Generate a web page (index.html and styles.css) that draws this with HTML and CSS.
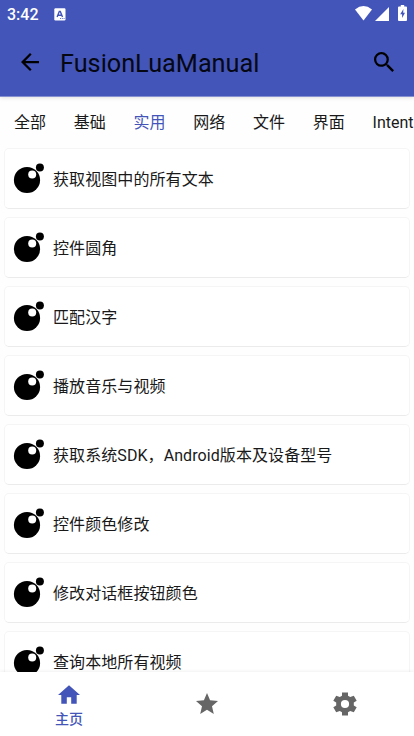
FILE: index.html
```html
<!DOCTYPE html>
<html lang="zh-CN">
<head>
<meta charset="utf-8">
<title>FusionLuaManual</title>
<link rel="stylesheet" href="styles.css">
</head>
<body>
<svg class="defs" aria-hidden="true">
  <symbol id="moon" viewBox="0 0 32 32"><circle cx="14" cy="18" r="13.1"/><circle cx="26.9" cy="5.6" r="4"/><circle cx="19.2" cy="12.6" r="4" fill="#fff"/></symbol>
</svg>
<div class="app">
  <header>
    <div class="status">
      <span class="time">3:42</span>
      <svg class="badge" viewBox="0 0 12 13"><rect x=".3" y=".3" width="11.2" height="12.2" rx="1.2" fill="#fff"/><path d="M3.1 9 5.3 3.5h1L8.5 9M4 7.2h3.6" fill="none" stroke="#4355b9" stroke-width="1.4"/><path d="M6 10.5h1m.8 0h1m.8 0h1" stroke="#4355b9" stroke-width=".8"/></svg>
      <span class="spacer"></span>
      <svg class="wifi" viewBox="0 0 17 15"><path d="M0 3.4Q8.5-3.2 17 3.4L8.5 14.6Z" fill="#fff"/></svg>
      <svg class="signal" viewBox="0 0 14 14"><path d="M14 0v14H0Z" fill="#fff"/></svg>
      <svg class="battery" viewBox="0 0 9 16"><path d="M2.8 0h3.4v1.5H8q1 0 1 1V15q0 1-1 1H1q-1 0-1-1V2.500q0-1 1-1h1.800Z" fill="#fff"/><path d="M5.400 4 2.200 9.200h1.900V13l2.900-5.200H5.200Z" fill="#4355b9"/></svg>
    </div>
    <div class="toolbar">
      <svg class="back" viewBox="4 4 16 16"><path d="M20 11H7.830l5.590-5.590L12 4l-8 8 8 8 1.410-1.410L7.830 13H20z"/></svg>
      <h1>FusionLuaManual</h1>
      <svg class="search" viewBox="3 3 17.500 17.500"><path d="M15.500 14h-.79l-.28-.27A6.471 6.471 0 0 0 16 9.500 6.500 6.500 0 1 0 9.500 16c1.610 0 3.090-.59 4.230-1.570l.27.28v.79l5 4.990L20.490 19l-4.990-5zm-6 0C7.010 14 5 11.990 5 9.500S7.010 5 9.500 5 14 7.010 14 9.500 11.990 14 9.500 14z"/></svg>
    </div>
  </header>
  <nav class="tabs"><span>全部</span><span>基础</span><span class="active">实用</span><span>网络</span><span>文件</span><span>界面</span><span>Intent</span></nav>
  <main>
    <div class="card"><svg><use href="#moon"/></svg><span>获取视图中的所有文本</span></div>
    <div class="card"><svg><use href="#moon"/></svg><span>控件圆角</span></div>
    <div class="card"><svg><use href="#moon"/></svg><span>匹配汉字</span></div>
    <div class="card"><svg><use href="#moon"/></svg><span>播放音乐与视频</span></div>
    <div class="card"><svg><use href="#moon"/></svg><span>获取系统SDK，Android版本及设备型号</span></div>
    <div class="card"><svg><use href="#moon"/></svg><span>控件颜色修改</span></div>
    <div class="card"><svg><use href="#moon"/></svg><span>修改对话框按钮颜色</span></div>
    <div class="card"><svg><use href="#moon"/></svg><span>查询本地所有视频</span></div>
  </main>
  <footer>
    <div class="item active"><svg class="home" viewBox="2 3 20 17"><path d="M10 20v-6h4v6h5v-8h3L12 3 2 12h3v8z"/></svg><span>主页</span></div>
    <div class="item"><svg class="star" viewBox="2 2 20 19"><path d="M12 17.270 18.180 21l-1.640-7.030L22 9.240l-7.190-.61L12 2 9.190 8.630 2 9.240l5.460 4.730L5.820 21z"/></svg></div>
    <div class="item"><svg class="gear" viewBox="-12 -12 24 24"><path fill-rule="evenodd" d="M-3-11.500H3V-8.200L5.200-7 8.800-8.200 11.700-3.300 8.800-1.500V1.500L11.700 3.300 8.800 8.200 5.200 7 3 8.200V11.500H-3V8.200L-5.200 7-8.800 8.200-11.700 3.300-8.800 1.500V-1.500L-11.700-3.300-8.800-8.200-5.200-7-3-8.200ZM0-4.100A4.100 4.100 0 1 0 0 4.100 4.100 4.100 0 1 0 0-4.100Z"/></svg></div>
  </footer>
</div>
</body>
</html>
```
FILE: styles.css
```css
* { box-sizing: border-box; }
body { margin: 0; font-family: Roboto, "Noto Sans CJK SC", sans-serif; color: #191919; }
svg { display: block; flex: none; }
.defs { display: none; }
.app { width: 414px; height: 736px; display: flex; flex-direction: column; overflow: hidden; background: #fefefe; }
header { height: 97px; flex: none; background: #4355b9; border-bottom: 1px solid #8490d0; box-shadow: 0 1px 4px rgba(0,0,0,.12); }
.status { height: 28px; display: flex; align-items: center; padding: 0 7px; color: #fff; }
.time { width: 47px; padding-top: 2px; font-size: 16px; font-weight: 500; line-height: 28px; }
.badge { width: 12px; height: 13px; }
.spacer { flex: 1; }
.wifi { width: 17px; height: 15px; margin-top: -2px; }
.signal { width: 14px; height: 14px; margin-left: 3px; }
.battery { width: 9px; height: 16px; margin: -2px 0 0 9px; }
.toolbar { height: 68px; display: flex; align-items: center; padding: 0 20px 0 21px; color: #0b0c14; }
.back { width: 18px; height: 18px; }
h1 { flex: 1; margin: 4px 0 0 21px; font-size: 25.25px; font-weight: 400; line-height: 34px; color: #050713; }
.search { width: 20px; height: 20px; }
.tabs { height: 51px; flex: none; display: flex; gap: 27.75px; padding: 0 0 0 14px; font-size: 16px; line-height: 52px; white-space: nowrap; }
.tabs .active { color: #4355b9; }
main { flex: 1; min-height: 0; overflow: hidden; padding: 0 4px; display: flex; flex-direction: column; gap: 8px; }
.card { height: 61px; flex: none; display: flex; align-items: center; padding-left: 9px; border: 1px solid #f5f5f5; border-bottom-color: #ebebeb; border-radius: 5px; background: #fff; font-size: 16px; line-height: 24px; letter-spacing: .08px; }
.card svg { width: 32px; height: 32px; margin: -2px 8px 0 -1px; }
.card span { padding-top: 3px; }
footer { height: 64px; flex: none; display: flex; background: #fff; position: relative; box-shadow: 0 -1px 3px rgba(0,0,0,.06); }
.item { flex: 1; display: flex; flex-direction: column; align-items: center; justify-content: center; fill: #666; }
.item.active { padding-top: 5px; fill: #4355b9; color: #4355b9; font-size: 14px; line-height: 20px; font-weight: 500; }
.home { width: 22px; height: 19px; margin-bottom: 5px; }
.star { width: 22px; height: 21px; margin-top: -1px; }
.gear { width: 24px; height: 24px; }
```
